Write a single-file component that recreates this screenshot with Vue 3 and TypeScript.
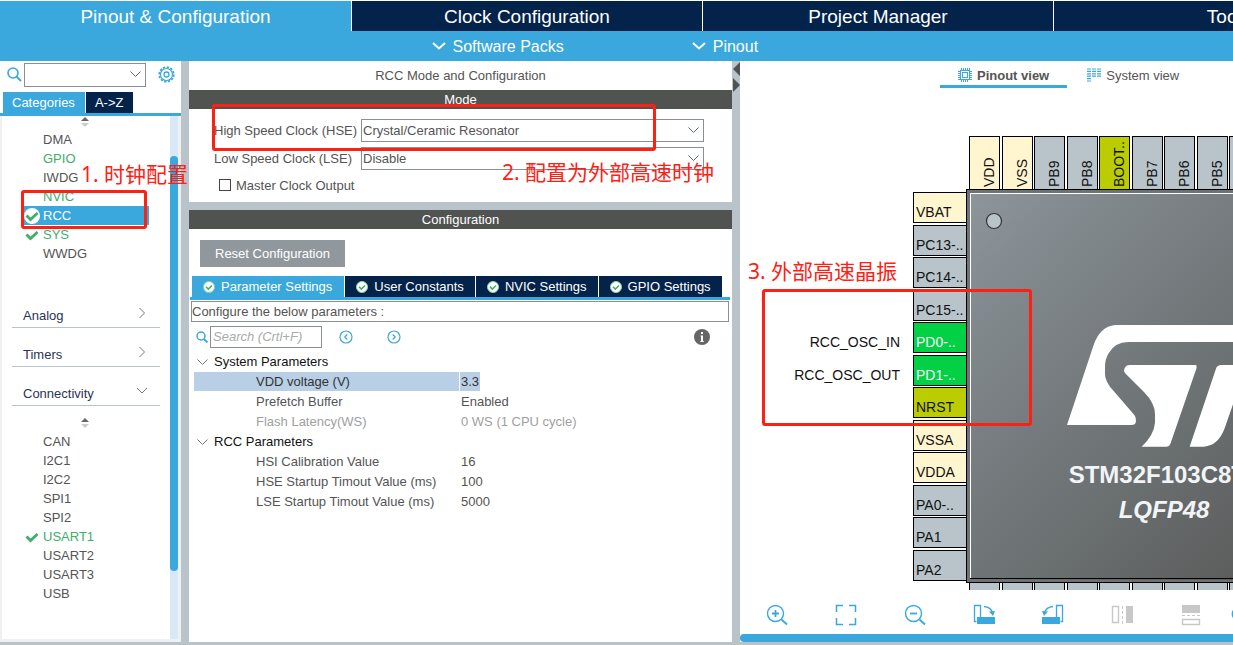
<script setup lang="ts">
import { ref } from 'vue'

interface Peripheral {
  name: string
  state?: 'enabled' | 'checked'
}

interface Pin {
  name: string
  kind: 'power' | 'free' | 'boot' | 'active'
  signal?: string
}

interface Param {
  name: string
  value: string
  disabled?: boolean
}

const mainTabs = ['Pinout & Configuration', 'Clock Configuration', 'Project Manager', 'Tools']
const activeTab = ref(0)

const systemCore: Peripheral[] = [
  { name: 'DMA' },
  { name: 'GPIO', state: 'enabled' },
  { name: 'IWDG' },
  { name: 'NVIC', state: 'enabled' },
  { name: 'RCC', state: 'checked' },
  { name: 'SYS', state: 'checked' },
  { name: 'WWDG' },
]
const connectivity: Peripheral[] = [
  { name: 'CAN' },
  { name: 'I2C1' },
  { name: 'I2C2' },
  { name: 'SPI1' },
  { name: 'SPI2' },
  { name: 'USART1', state: 'checked' },
  { name: 'USART2' },
  { name: 'USART3' },
  { name: 'USB' },
]
const selected = ref('RCC')

const categories = [
  { name: 'Analog', open: false },
  { name: 'Timers', open: false },
  { name: 'Connectivity', open: true },
]

const hse = ref('Crystal/Ceramic Resonator')
const lse = ref('Disable')
const masterClock = ref(false)

const settingsTabs = ['Parameter Settings', 'User Constants', 'NVIC Settings', 'GPIO Settings']
const activeSettings = ref(0)
const selectedParam = ref('VDD voltage (V)')

const groups: { title: string; params: Param[] }[] = [
  {
    title: 'System Parameters',
    params: [
      { name: 'VDD voltage (V)', value: '3.3' },
      { name: 'Prefetch Buffer', value: 'Enabled' },
      { name: 'Flash Latency(WS)', value: '0 WS (1 CPU cycle)', disabled: true },
    ],
  },
  {
    title: 'RCC Parameters',
    params: [
      { name: 'HSI Calibration Value', value: '16' },
      { name: 'HSE Startup Timout Value (ms)', value: '100' },
      { name: 'LSE Startup Timout Value (ms)', value: '5000' },
    ],
  },
]

const leftPins: Pin[] = [
  { name: 'VBAT', kind: 'power' },
  { name: 'PC13-..', kind: 'free' },
  { name: 'PC14-..', kind: 'free' },
  { name: 'PC15-..', kind: 'free' },
  { name: 'PD0-..', kind: 'active', signal: 'RCC_OSC_IN' },
  { name: 'PD1-..', kind: 'active', signal: 'RCC_OSC_OUT' },
  { name: 'NRST', kind: 'boot' },
  { name: 'VSSA', kind: 'power' },
  { name: 'VDDA', kind: 'power' },
  { name: 'PA0-..', kind: 'free' },
  { name: 'PA1', kind: 'free' },
  { name: 'PA2', kind: 'free' },
]
const topPins: Pin[] = [
  { name: 'VDD', kind: 'power' },
  { name: 'VSS', kind: 'power' },
  { name: 'PB9', kind: 'free' },
  { name: 'PB8', kind: 'free' },
  { name: 'BOOT..', kind: 'boot' },
  { name: 'PB7', kind: 'free' },
  { name: 'PB6', kind: 'free' },
  { name: 'PB5', kind: 'free' },
  { name: 'PB4', kind: 'free' },
  { name: 'PB3', kind: 'free' },
  { name: 'PA15', kind: 'free' },
  { name: 'PA14', kind: 'free' },
]
const pinOffset = (i: number): number => Math.round(i * 32.5)
</script>

<template>
  <div class="app">
    <nav class="main-tabs">
      <button
        v-for="(tab, i) in mainTabs"
        :key="tab"
        type="button"
        :class="['main-tab', { active: i === activeTab }]"
        @click="activeTab = i"
      >{{ tab }}</button>
    </nav>

    <div class="sub-bar">
      <button type="button" class="sub-item">
        <svg width="14" height="8" viewBox="0 0 14 8"><path d="M1 1l6 5.500 6-5.500" fill="none" stroke="#fff" stroke-width="2" /></svg>
        Software Packs
      </button>
      <button type="button" class="sub-item">
        <svg width="14" height="8" viewBox="0 0 14 8"><path d="M1 1l6 5.500 6-5.500" fill="none" stroke="#fff" stroke-width="2" /></svg>
        Pinout
      </button>
    </div>

    <main class="workspace">
      <aside class="sidebar">
        <div class="finder">
          <svg class="finder-lens" width="15" height="15" viewBox="0 0 15 15">
            <circle cx="6" cy="6" r="5" fill="none" stroke="#3aa8dc" stroke-width="1.6" />
            <path d="M9.600 9.600L14 14" stroke="#3aa8dc" stroke-width="2" />
          </svg>
          <span class="select-wrap finder-select">
            <select aria-label="Find a peripheral"><option></option></select>
            <svg width="11" height="7" viewBox="0 0 11 7"><path d="M.5.500l5 5 5-5" fill="none" stroke="#666" /></svg>
          </span>
          <button type="button" class="gear" aria-label="Options">
            <svg width="17" height="17" viewBox="0 0 17 17" fill="none" stroke="#3aa8dc">
              <circle cx="8.500" cy="8.500" r="7.300" stroke-width="1.700" stroke-dasharray="2.300 1.522" />
              <circle cx="8.500" cy="8.500" r="6" stroke-width="1.200" />
              <circle cx="8.500" cy="8.500" r="2.500" stroke-width="1.300" />
            </svg>
          </button>
        </div>
        <div class="side-tabs">
          <button type="button" class="side-tab active">Categories</button>
          <button type="button" class="side-tab">A-&gt;Z</button>
        </div>

        <div class="side-scroll">
          <div class="side-content">
            <button type="button" class="sorter" aria-label="Sort system core">
              <svg width="8" height="10" viewBox="0 0 8 10"><path d="M0 4l4-4 4 4z" fill="#666" /><path d="M0 6l4 4 4-4z" fill="#ccc" /></svg>
            </button>
            <ul class="peripherals">
              <li v-for="p in systemCore" :key="p.name">
                <button
                  type="button"
                  :class="['peripheral', p.state, { selected: p.name === selected }]"
                  @click="selected = p.name"
                >
                  <span class="mark">
                    <svg v-if="p.state === 'checked'" width="16" height="16" viewBox="0 0 16 16">
                      <circle v-if="p.name === selected" cx="8" cy="8" r="8" fill="#fff" />
                      <path d="M2.500 7.500l4 4 7-6.500" fill="none" stroke="#41ad6b" stroke-width="2.800" />
                    </svg>
                  </span>{{ p.name }}
                </button>
              </li>
            </ul>

            <div class="categories">
              <button v-for="c in categories" :key="c.name" type="button" class="category" :aria-expanded="c.open">
                {{ c.name }}
                <svg width="12" height="12" viewBox="0 0 12 12" fill="none" stroke="#777">
                  <path v-if="c.open" d="M1 3l5 5 5-5" />
                  <path v-else d="M3.500 1l5 5-5 5" />
                </svg>
              </button>
            </div>

            <button type="button" class="sorter second" aria-label="Sort connectivity">
              <svg width="8" height="10" viewBox="0 0 8 10"><path d="M0 4l4-4 4 4z" fill="#666" /><path d="M0 6l4 4 4-4z" fill="#ccc" /></svg>
            </button>
            <ul class="peripherals">
              <li v-for="p in connectivity" :key="p.name">
                <button
                  type="button"
                  :class="['peripheral', p.state, { selected: p.name === selected }]"
                  @click="selected = p.name"
                >
                  <span class="mark">
                    <svg v-if="p.state === 'checked'" width="16" height="16" viewBox="0 0 16 16">
                      <path d="M2.500 7.500l4 4 7-6.500" fill="none" stroke="#41ad6b" stroke-width="2.800" />
                    </svg>
                  </span>{{ p.name }}
                </button>
              </li>
            </ul>
          </div>
          <div class="track"><div class="thumb"></div></div>
        </div>

        <div class="frame frame-rcc"></div>
        <p class="note note-clock">1. 时钟配置</p>
      </aside>

      <div class="splitter"></div>

      <section class="center">
        <h1 class="panel-title">RCC Mode and Configuration</h1>
        <h2 class="bar">Mode</h2>
        <div class="mode">
          <div class="mode-row">
            <label for="hse">High Speed Clock (HSE)</label>
            <span class="select-wrap">
              <select id="hse" v-model="hse">
                <option>Disable</option>
                <option>Crystal/Ceramic Resonator</option>
              </select>
              <svg width="11" height="7" viewBox="0 0 11 7"><path d="M.5.500l5 5 5-5" fill="none" stroke="#666" /></svg>
            </span>
          </div>
          <div class="mode-row">
            <label for="lse">Low Speed Clock (LSE)</label>
            <span class="select-wrap">
              <select id="lse" v-model="lse">
                <option>Disable</option>
                <option>Crystal/Ceramic Resonator</option>
              </select>
              <svg width="11" height="7" viewBox="0 0 11 7"><path d="M.5.500l5 5 5-5" fill="none" stroke="#666" /></svg>
            </span>
          </div>
          <label class="check-row"><input v-model="masterClock" type="checkbox" />Master Clock Output</label>
        </div>
        <div class="h-splitter"></div>
        <h2 class="bar">Configuration</h2>
        <div class="config">
          <button type="button" class="reset">Reset Configuration</button>
          <div class="settings-tabs">
            <button
              v-for="(tab, i) in settingsTabs"
              :key="tab"
              type="button"
              :class="['settings-tab', { active: i === activeSettings }]"
              @click="activeSettings = i"
            >
              <svg width="12" height="12" viewBox="0 0 12 12">
                <circle cx="6" cy="6" r="5.500" fill="#fff" stroke="#8fd3a8" />
                <path d="M3 5.800l2.300 2.300L9 4.500" fill="none" stroke="#41ad6b" stroke-width="1.500" />
              </svg>{{ tab }}
            </button>
          </div>
          <p class="hint">Configure the below parameters :</p>
          <div class="param-tools">
            <svg width="12" height="12" viewBox="0 0 12 12">
              <circle cx="5" cy="5" r="4" fill="none" stroke="#3aa8dc" stroke-width="1.500" />
              <path d="M8 8l3.500 3.500" stroke="#3aa8dc" stroke-width="1.800" />
            </svg>
            <input type="text" placeholder="Search (Crtl+F)" aria-label="Search parameters" />
            <button type="button" class="step" aria-label="Previous match">
              <svg width="14" height="14" viewBox="0 0 14 14" fill="none" stroke="#3aa8dc">
                <circle cx="7" cy="7" r="6" stroke-width="1.200" /><path d="M8.300 4.500L5.800 7l2.500 2.500" stroke-width="1.200" />
              </svg>
            </button>
            <button type="button" class="step next" aria-label="Next match">
              <svg width="14" height="14" viewBox="0 0 14 14" fill="none" stroke="#3aa8dc">
                <circle cx="7" cy="7" r="6" stroke-width="1.200" /><path d="M5.700 4.500L8.200 7l-2.500 2.500" stroke-width="1.200" />
              </svg>
            </button>
            <button type="button" class="info" aria-label="Information">
              <svg width="16" height="16" viewBox="0 0 16 16">
                <circle cx="8" cy="8" r="8" fill="#666" />
                <path d="M7 3h2v2H7zM6.500 6.500H9V12h.8v1H6.300v-1H7V7.500h-.5z" fill="#fff" />
              </svg>
            </button>
          </div>
          <table class="params">
            <tbody v-for="g in groups" :key="g.title">
              <tr>
                <th colspan="2">
                  <svg width="11" height="7" viewBox="0 0 11 7"><path d="M.5.500l5 5 5-5" fill="none" stroke="#777" /></svg>{{ g.title }}
                </th>
              </tr>
              <tr
                v-for="p in g.params"
                :key="p.name"
                :class="{ disabled: p.disabled, selected: p.name === selectedParam }"
                @click="selectedParam = p.name"
              >
                <td class="param-name"><span>{{ p.name }}</span></td>
                <td class="param-value"><span>{{ p.value }}</span></td>
              </tr>
            </tbody>
          </table>
        </div>

        <div class="frame frame-hse"></div>
        <p class="note note-hse">2. 配置为外部高速时钟</p>
      </section>

      <div class="splitter">
        <svg width="8" height="32" viewBox="0 0 8 32"><path d="M8 1v14L1 8zM1 17v14l7-7z" fill="#515351" /></svg>
      </div>

      <section class="pinout">
        <div class="view-tabs">
          <button type="button" class="view-tab active">
            <svg width="14" height="14" viewBox="0 0 14 14" fill="none" stroke="#3aa8dc">
              <rect x="2.500" y="2.500" width="9" height="9" /><rect x="4.500" y="4.500" width="5" height="5" />
              <path d="M3.500 0v2M5.500 0v2M7.500 0v2M9.500 0v2M11.500 0v2M3.500 12v2M5.500 12v2M7.500 12v2M9.500 12v2M0 3.500h2M0 5.500h2M0 7.500h2M0 9.500h2M12 3.500h2M12 5.500h2M12 7.500h2M12 9.500h2M0 11.500h2M12 11.500h2" />
            </svg>
            Pinout view
          </button>
          <button type="button" class="view-tab">
            <svg width="14" height="14" viewBox="0 0 14 14" stroke="#3aa8dc" stroke-width="1.200">
              <path d="M0 1h4M0 3.400h4M0 5.800h4M0 8.200h4M0 10.600h4M0 13h4M5 1h4M5 3.400h4M5 5.800h4M5 8.200h4M10 1h4M10 3.400h4M10 5.800h4M10 8.200h4" />
            </svg>
            System view
          </button>
        </div>

        <svg class="chip" role="img" aria-label="Microcontroller package">
          <defs>
            <linearGradient id="die" x1="0" y1="0" x2="1" y2="1">
              <stop offset="0" stop-color="#8d959b" />
              <stop offset="0.350" stop-color="#777d80" />
              <stop offset="0.600" stop-color="#696e6f" />
              <stop offset="0.850" stop-color="#5c5c5c" />
              <stop offset="1" stop-color="#555" />
            </linearGradient>
          </defs>
          <g v-for="(p, i) in topPins" :key="p.name">
            <rect :x="229.5 + pinOffset(i)" y="47.500" width="30" height="56" :class="['pin', p.kind]" />
            <text :transform="`translate(${254 + pinOffset(i)} 98) rotate(-90)`" class="pin-text">{{ p.name }}</text>
            <rect :x="229.5 + pinOffset(i)" y="488.500" width="30" height="56" class="pin free" />
          </g>
          <g v-for="(p, i) in leftPins" :key="p.name">
            <rect x="173.500" :y="103.5 + pinOffset(i)" width="56" height="30" :class="['pin', p.kind]" />
            <text x="176" :y="128 + pinOffset(i)" :class="['pin-text', { light: p.kind === 'active' }]">{{ p.name }}</text>
            <text v-if="p.signal" x="160" :y="128 + pinOffset(i)" class="pin-text" text-anchor="end">{{ p.signal }}</text>
          </g>
          <rect x="226.500" y="100.500" width="394" height="393" fill="#6d7375" stroke="#000" />
          <rect x="230" y="104" width="388" height="387" fill="url(#die)" />
          <path d="M230.500 490V104.500H618" fill="none" stroke="#fff" />
          <path d="M230 489.500H617.500V105" fill="none" stroke="#000" />
          <circle cx="254" cy="132" r="7.500" fill="#b8c4ca" stroke="#333" stroke-width="1.200" />
          <g transform="translate(260 211) scale(.3333)" fill="#fff">
            <path d="M201 375L281 135Q300 80 345 75H920L904 126H385Q345 126 326 160Q315 178 315 200V220Q315 240 330 260L403 345Q408 350 408 362Q408 375 394 375Z" />
            <path d="M586 195H388Q373 197 372 213Q373 218 380 224L432 276Q465 310 465 342V368Q462 405 425 440H500Q508 440 511 432L589 206Q592 195 586 195Z" />
            <path d="M740 195H665Q651 195 648 206L569 440H612Q655 437 674 385L740 195Z" />
          </g>
          <text x="424" y="394" class="chip-name" text-anchor="middle">STM32F103C8Tx</text>
          <text x="424" y="429" class="chip-name package" text-anchor="middle">LQFP48</text>
        </svg>

        <div class="tools">
          <button type="button" aria-label="Zoom in">
            <svg width="22" height="22" viewBox="0 0 22 22" fill="none" stroke="#3aa8dc" stroke-width="1.400">
              <circle cx="9.500" cy="9.500" r="8" /><path d="M15.500 15.500l5.500 5" stroke-width="1.800" /><path d="M6 9.500h7M9.500 6v7" stroke-width="1.800" />
            </svg>
          </button>
          <button type="button" aria-label="Fit to window">
            <svg width="22" height="22" viewBox="0 0 22 22" fill="none" stroke="#3aa8dc" stroke-width="1.500">
              <path d="M1.500 8V1.500H8M14 1.500h6.500V8M20.500 14v6.500H14M8 20.500H1.500V14" />
            </svg>
          </button>
          <button type="button" aria-label="Zoom out">
            <svg width="22" height="22" viewBox="0 0 22 22" fill="none" stroke="#3aa8dc" stroke-width="1.400">
              <circle cx="9.500" cy="9.500" r="8" /><path d="M15.500 15.500l5.500 5" stroke-width="1.800" /><path d="M6 9.500h7" stroke-width="1.800" />
            </svg>
          </button>
          <button type="button" aria-label="Rotate clockwise">
            <svg width="22" height="22" viewBox="0 0 22 22" fill="none" stroke="#3aa8dc">
              <path d="M3.500 17.500h-2V1.500h6V13" stroke-width="1.300" /><path d="M4 13h18v7H4z" fill="#3aa8dc" stroke="none" />
              <path d="M11 2.500Q18 3 19.500 9" stroke-width="1.300" /><path d="M16 7.500l6-.5-2 5z" fill="#3aa8dc" stroke="none" />
            </svg>
          </button>
          <button type="button" aria-label="Rotate counterclockwise">
            <svg width="22" height="22" viewBox="0 0 22 22" fill="none" stroke="#3aa8dc">
              <path d="M18.500 17.500h2V1.500h-6V13" stroke-width="1.300" /><path d="M0 13h18v7H0z" fill="#3aa8dc" stroke="none" />
              <path d="M11 2.500Q4 3 2.500 9" stroke-width="1.300" /><path d="M6 7.500L0 7l2 5z" fill="#3aa8dc" stroke="none" />
            </svg>
          </button>
          <button type="button" aria-label="Flip horizontally">
            <svg width="22" height="22" viewBox="0 0 22 22" fill="none" stroke="#c8c8c8">
              <path d="M1.500 2.500h6v16h-6z" stroke-width="1.400" /><path d="M11.500 2v18" stroke-dasharray="3 2" /><path d="M15 2h7v17h-7z" fill="#c8c8c8" stroke="none" />
            </svg>
          </button>
          <button type="button" aria-label="Flip vertically">
            <svg width="22" height="22" viewBox="0 0 22 22" fill="none" stroke="#c8c8c8">
              <path d="M2 1h18v8H2z" fill="#c8c8c8" stroke="none" /><path d="M2 11.500h18" stroke-dasharray="3 2" /><path d="M2.500 15.500h17v5h-17z" stroke-width="1.400" />
            </svg>
          </button>
          <button type="button" class="find" aria-label="Find pin">
            <svg width="18" height="18" viewBox="0 0 18 18" fill="none" stroke="#3aa8dc" stroke-width="1.800">
              <circle cx="8" cy="8" r="6.500" /><path d="M13 13l4 4" />
            </svg>
          </button>
        </div>
        <div class="h-scroll"></div>

        <div class="frame frame-osc"></div>
        <p class="note note-osc">3. 外部高速晶振</p>
      </section>
    </main>
  </div>
</template>

<style>
html,
body {
  margin: 0;
  background: #b8c4ca;
}
</style>

<style scoped>
.app {
  display: flex;
  flex-direction: column;
  min-height: 100vh;
  overflow: hidden;
  background: #b8c4ca;
  color: #545454;
  font-family: "Liberation Sans", Arial, sans-serif;
  font-size: 13px;
  line-height: 19px;
}
*,
*::before {
  box-sizing: border-box;
}
button,
input,
select {
  margin: 0;
  padding: 0;
  border: 0;
  border-radius: 0;
  background: none;
  color: inherit;
  font: inherit;
}
svg {
  display: block;
  flex: none;
}
p,
h1,
h2,
ul {
  margin: 0;
  padding: 0;
  font-weight: 400;
}

.main-tabs {
  display: flex;
  gap: 1px;
  padding-top: 1px;
  background: #fff;
}
.main-tab {
  flex: 0 0 350px;
  height: 30px;
  background: #03234b;
  color: #fff;
  font-size: 19px;
}
.main-tab:first-child {
  flex-basis: 351px;
}
.main-tab.active {
  background: #3aa8dc;
}
.sub-bar {
  display: flex;
  gap: 128px;
  height: 30px;
  padding-left: 35%;
  background: #3aa8dc;
}
.sub-item {
  display: flex;
  align-items: center;
  gap: 7px;
  color: #fff;
  font-size: 16px;
}

.workspace {
  display: grid;
  flex: 1;
  grid-template-columns: 181px 8px minmax(0, 543fr) 8px minmax(0, 493fr);
  padding-bottom: 3px;
}

.sidebar {
  position: relative;
  display: flex;
  flex-direction: column;
  background: #f0f0f0;
}
.finder {
  display: flex;
  align-items: center;
  height: 31px;
  padding: 0 6px 4px 7px;
  background: #fff;
}
.select-wrap {
  position: relative;
  display: flex;
}
.select-wrap select {
  width: 100%;
  height: 23px;
  padding-left: 1px;
  border: 1px solid #888f95;
  background: #fff;
  appearance: none;
}
.select-wrap svg {
  position: absolute;
  top: 8px;
  right: 5px;
  pointer-events: none;
}
.finder-select {
  flex: 1;
  margin: 0 12px 0 2px;
}
.finder-select select {
  height: 24px;
}
.side-tabs {
  display: flex;
  gap: 1px;
  padding-left: 3px;
  border-bottom: 3px solid #3aa8dc;
  background: #fff;
}
.side-tab {
  height: 21px;
  padding: 0 10px 0 9px;
  background: #03234b;
  color: #fff;
}
.side-tab.active {
  background: #3aa8dc;
}
.side-scroll {
  display: flex;
  flex: 1;
  margin: 0 3px 3px 2px;
  background: #fff;
}
.side-content {
  flex: 1;
  padding-bottom: 36px;
}
.track {
  width: 8px;
  padding-top: 40px;
  background: #d9e8f6;
}
.thumb {
  height: 86%;
  border-radius: 4px;
  background: #3aa8dc;
}
.sorter {
  display: block;
  padding: 1px 0 3px 79px;
}
.sorter.second {
  padding: 12px 0 4px 79px;
}
.peripherals {
  list-style: none;
}
.peripheral {
  display: flex;
  width: 125px;
  height: 19px;
  margin-left: 22px;
  text-align: left;
}
.mark {
  display: flex;
  flex: none;
  align-items: center;
  width: 19px;
}
.enabled,
.checked {
  color: #41ad6b;
}
.peripheral.selected {
  background: #3aa8dc;
  color: #fff;
}
.categories {
  padding: 26px 10px 0;
}
.category {
  display: flex;
  align-items: flex-end;
  justify-content: space-between;
  width: 100%;
  height: 39px;
  padding: 0 12px 2px 11px;
  border-bottom: 1px solid #b8c4ca;
  color: #2b3358;
}
.category svg {
  margin-bottom: 6px;
}

.splitter {
  background: #b8c4ca;
}
.center {
  position: relative;
  display: flex;
  flex-direction: column;
  background: #fff;
}
.panel-title {
  height: 29px;
  font-size: 13px;
  line-height: 29px;
  text-align: center;
}
.bar {
  height: 19px;
  background: #515351;
  color: #fff;
  font-size: 13px;
  line-height: 19px;
  text-align: center;
}
.mode {
  display: grid;
  gap: 5px;
  padding: 10px 28px 5px 25px;
}
.mode-row {
  display: grid;
  grid-template-columns: 147px minmax(0, 1fr);
  align-items: center;
}
.check-row {
  display: flex;
  align-items: center;
  gap: 5px;
  height: 22px;
  padding: 0 0 2px 5px;
}
.check-row input {
  width: 12px;
  height: 12px;
  border: 1px solid #444;
  background: #fff;
  appearance: none;
}
.check-row input:checked {
  background: #3aa8dc;
}
.h-splitter {
  height: 8px;
  background: #b8c4ca;
}
.config {
  flex: 1;
  padding-top: 11px;
}
.reset {
  height: 27px;
  margin-left: 11px;
  padding: 0 15px;
  background: #90989e;
  color: #fff;
}
.settings-tabs {
  display: flex;
  gap: 1px;
  margin: 9px 2px 0 1px;
  padding-left: 2px;
  border-bottom: 3px solid #3aa8dc;
}
.settings-tab {
  display: flex;
  align-items: center;
  gap: 6px;
  height: 21px;
  padding: 0 11px;
  background: #03234b;
  color: #fff;
}
.settings-tab:first-child {
  padding-right: 12px;
}
.settings-tab.active {
  background: #3aa8dc;
}
.hint {
  margin: 1px 3px 0 2px;
  border: 1px solid #888f95;
}
.param-tools {
  display: flex;
  align-items: center;
  height: 29px;
  padding: 0 22px 0 7px;
}
.param-tools input {
  width: 112px;
  height: 22px;
  margin: 0 17px 0 2px;
  padding: 0 2px;
  border: 1px solid #888f95;
  font-style: italic;
}
.param-tools input::placeholder {
  color: #aaa;
  opacity: 1;
}
.step.next {
  margin-left: 34px;
}
.info {
  margin-left: auto;
}
.params {
  width: calc(100% - 8px);
  margin-left: 5px;
  border-collapse: collapse;
}
.params th {
  color: #111;
  font-weight: 400;
  text-align: left;
}
.params th svg {
  display: inline-block;
  margin: 0 6px 0 3px;
}
.params th,
.params td {
  height: 20px;
  padding: 0;
}
.param-name {
  width: 266px;
}
.param-name span {
  display: block;
  margin-right: 1px;
  padding-left: 62px;
}
.param-value span {
  display: inline-block;
  padding: 0 1px;
}
.params .selected span {
  background: #b8cfe5;
  color: #333;
}
.params .disabled {
  color: #a0a0a0;
}

.pinout {
  position: relative;
  display: flex;
  flex-direction: column;
  overflow: hidden;
  background: #fff;
}
.view-tabs {
  display: flex;
  gap: 2px;
  height: 28px;
  padding: 0 0 1px 200px;
}
.view-tab {
  display: flex;
  flex: none;
  align-items: center;
  gap: 5px;
  padding: 4px 18px 0;
  border-bottom: 3px solid transparent;
}
.view-tab.active {
  border-color: #3aa8dc;
  font-weight: 700;
}
.chip {
  width: 100%;
  height: 501px;
  overflow: hidden;
}
.pin {
  stroke: #000;
  stroke-width: 1;
}
.pin.power {
  fill: #fff5cf;
}
.pin.free {
  fill: #b8c4ca;
}
.pin.boot {
  fill: #bbcc00;
}
.pin.active {
  fill: #02d045;
}
.pin-text {
  fill: #111;
  font-size: 14px;
}
.pin-text.light {
  fill: #fff;
}
.chip-name {
  fill: #f2f5f7;
  font-size: 24px;
  font-weight: 700;
}
.package {
  font-style: italic;
}
.tools {
  display: flex;
  flex: 1;
  align-items: center;
  min-height: 44px;
  padding: 5px 0 0 2px;
}
.tools button {
  display: flex;
  flex: 0 0 69px;
  justify-content: center;
}
.tools .find {
  justify-content: flex-start;
  padding-left: 6px;
}
.h-scroll {
  height: 8px;
  border-radius: 4px 0 0 4px;
  background: #3aa8dc;
}

.frame {
  position: absolute;
  border: 3px solid #ff2014;
  border-radius: 3px;
  pointer-events: none;
}
.frame-rcc {
  top: 129px;
  left: 21px;
  width: 126px;
  height: 39px;
}
.frame-hse {
  top: 43px;
  left: 23px;
  width: 444px;
  height: 47px;
}
.frame-osc {
  top: 228px;
  left: 22px;
  width: 270px;
  height: 137px;
}
.note {
  position: absolute;
  color: #ff2014;
  font-family: "Noto Sans", "Noto Sans CJK SC", sans-serif;
  font-size: 21px;
  line-height: 28px;
  white-space: nowrap;
}
.note-clock {
  top: 99px;
  left: 81px;
  z-index: 1;
}
.note-hse {
  top: 97px;
  left: 313px;
}
.note-osc {
  top: 196px;
  left: 8px;
}
</style>
